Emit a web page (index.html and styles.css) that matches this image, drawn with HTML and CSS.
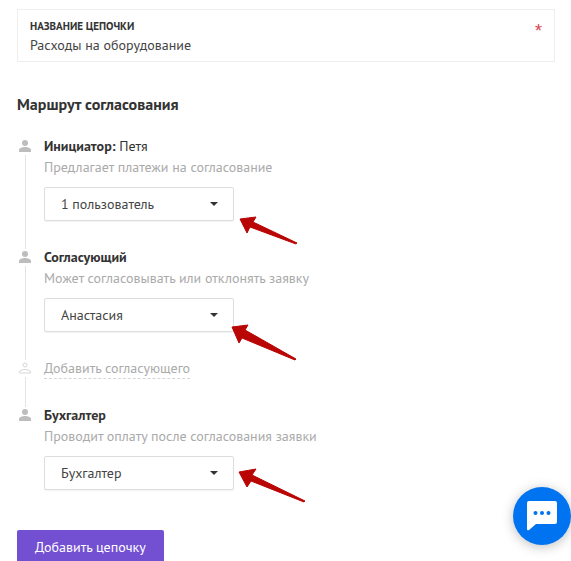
FILE: index.html
```
<!DOCTYPE html>
<html lang="ru">
<head>
    <meta charset="UTF-8">
    <meta name="viewport" content="width=device-width, initial-scale=1.0">
    <title>Маршрут согласования</title>
    <link rel="stylesheet" href="styles.css">
</head>
<body>

    <form class="chain-form">
        <div class="name-field">
            <div class="name-main">
                <label for="chain-name">Название цепочки</label>
                <input type="text" id="chain-name" value="Расходы на оборудование" required>
            </div>
            <span class="required">*</span>
        </div>

        <h2>Маршрут согласования</h2>

        <div class="route">
            <!-- Initiator -->
            <div class="step">
                <div class="marker">
                    <svg class="user-icon" viewBox="0 0 14 12"><circle cx="7" cy="3" r="3"/><path d="M1 12V10C1 8 4.500 7 7 7s6 1 6 3v2z"/></svg>
                </div>
                <div class="step-body">
                    <label for="initiator"><b>Инициатор:</b> Петя</label>
                    <p>Предлагает платежи на согласование</p>
                    <div class="select-box">
                        <select id="initiator">
                            <option>1 пользователь</option>
                        </select>
                        <svg class="arrow arrow-initiator" viewBox="0 0 66 34"><path d="M1 3L17 1l-3 5 44 21-1 1-46-17-3 6z"/></svg>
                    </div>
                </div>
            </div>

            <!-- Approver -->
            <div class="step">
                <div class="marker">
                    <svg class="user-icon" viewBox="0 0 14 12"><circle cx="7" cy="3" r="3"/><path d="M1 12V10C1 8 4.500 7 7 7s6 1 6 3v2z"/></svg>
                </div>
                <div class="step-body">
                    <label for="approver"><b>Согласующий</b></label>
                    <p>Может согласовывать или отклонять заявку</p>
                    <div class="select-box">
                        <select id="approver">
                            <option>Анастасия</option>
                        </select>
                        <svg class="arrow arrow-approver" viewBox="0 0 66 38"><path d="M1 3L17 1l-3 5 51 29-1 1-53-22-3 5z"/></svg>
                    </div>
                </div>
            </div>

            <!-- Add one more approver -->
            <div class="step">
                <div class="marker">
                    <svg class="user-icon outline" viewBox="0 0 14 12"><circle cx="7" cy="3" r="2"/><path d="M1.500 11v-1c0-1.500 3-2.500 5.500-2.500s5.500 1 5.500 2.500v1z"/></svg>
                </div>
                <div class="step-body">
                    <a href="#" class="add-link">Добавить согласующего</a>
                </div>
            </div>

            <!-- Accountant -->
            <div class="step">
                <div class="marker">
                    <svg class="user-icon" viewBox="0 0 14 12"><circle cx="7" cy="3" r="3"/><path d="M1 12V10C1 8 4.500 7 7 7s6 1 6 3v2z"/></svg>
                </div>
                <div class="step-body">
                    <label for="accountant"><b>Бухгалтер</b></label>
                    <p>Проводит оплату после согласования заявки</p>
                    <div class="select-box">
                        <select id="accountant">
                            <option>Бухгалтер</option>
                        </select>
                        <svg class="arrow arrow-accountant" viewBox="0 0 68 36"><path d="M1 4L18 1l-4 6 53 26-1 1-53-21-4 6z"/></svg>
                    </div>
                </div>
            </div>
        </div>

        <button type="submit" class="submit-btn">Добавить цепочку</button>
    </form>

    <button type="button" class="chat-btn" aria-label="Чат">
        <svg viewBox="0 0 30 30"><path fill="#fff" d="M2 0h26q2 0 2 2v19q0 2-2 2H9l-7 6q-2 1-2-1V2q0-2 2-2z"/><g fill="#0073f0"><circle cx="8.500" cy="12" r="2"/><circle cx="15" cy="12" r="2"/><circle cx="21.500" cy="12" r="2"/></g></svg>
    </button>

</body>
</html>
```
FILE: styles.css
```
* {
    box-sizing: border-box;
}

body {
    font-family: "PT Sans", "Noto Sans", sans-serif;
    font-size: 14px;
    line-height: 20px;
    color: #333;
    background-color: #fff;
    margin: 0;
    height: 100vh;
    overflow: hidden;
}

.chain-form {
    padding: 9px 16px 0 17px;
}

.name-field {
    display: flex;
    justify-content: space-between;
    border: 1px solid #eee;
    padding: 7px 12px 6px;
}

.name-main {
    flex: 1;
}

.name-field label {
    display: block;
    font-size: 11px;
    line-height: 18px;
    font-weight: bold;
    text-transform: uppercase;
}

.name-field input {
    display: block;
    width: 100%;
    height: 20px;
    padding: 0;
    border: none;
    outline: none;
    font: inherit;
    color: #444;
}

.required {
    height: 20px;
    color: #d9434e;
    font-family: "Liberation Sans", Arial, sans-serif;
    font-size: 18px;
    line-height: 28px;
}

h2 {
    font-size: 16px;
    line-height: 20px;
    margin: 32px 0 22px;
}

.step {
    display: flex;
    gap: 11px;
}

/* Icon with the line running down to the next step */
.marker {
    width: 16px;
    display: flex;
    flex-direction: column;
    align-items: center;
}

.marker::after {
    content: "";
    flex: 1;
    width: 1px;
    margin: 3px 0 -2px;
    background-color: #e4e4e4;
}

.step:last-child .marker::after {
    display: none;
}

.user-icon {
    width: 14px;
    height: 12px;
    margin-top: 4px;
    fill: #bdbdbd;
}

.user-icon.outline {
    fill: none;
    stroke: #d6d6d6;
}

.step-body {
    flex: 1;
    padding-bottom: 26px;
}

.step-body label {
    display: block;
}

.step-body p {
    margin: 1px 0 10px;
    color: #aaa;
}

.add-link {
    display: inline-block;
    color: #aaa;
    text-decoration: none;
    line-height: 19px;
    border-bottom: 1px dashed #d6d6d6;
}

.select-box {
    position: relative;
    width: 190px;
}

.select-box select {
    display: block;
    appearance: none;
    width: 100%;
    height: 34px;
    padding: 0 32px 0 16px;
    border: 1px solid #ddd;
    border-radius: 2px;
    background-color: #fff;
    box-shadow: 0 1px 1px rgba(0, 0, 0, 0.05);
    font: inherit;
    color: #444;
}

.select-box::after {
    content: "";
    position: absolute;
    top: 15px;
    right: 16px;
    border: 4px solid transparent;
    border-top-color: #333;
    border-bottom: none;
    pointer-events: none;
}

/* Pointers drawn over the page */
.arrow {
    position: absolute;
    fill: #b90504;
    stroke: #b90504;
    stroke-linejoin: round;
    pointer-events: none;
}

.arrow-initiator {
    left: 195px;
    top: 29px;
    width: 66px;
}

.arrow-approver {
    left: 187px;
    top: 26px;
    width: 66px;
}

.arrow-accountant {
    left: 194px;
    top: 12px;
    width: 68px;
}

.submit-btn {
    display: block;
    height: 34px;
    margin-top: 14px;
    padding: 0 18px;
    border: none;
    border-radius: 2px;
    background-color: #7350d2;
    font: inherit;
    color: #fff;
    cursor: pointer;
}

.chat-btn {
    position: fixed;
    right: 0;
    bottom: 16px;
    width: 58px;
    height: 58px;
    padding: 0;
    border: none;
    border-radius: 50%;
    background-color: #0073f0;
    box-shadow: 0 2px 12px rgba(0, 0, 0, 0.25);
    display: flex;
    justify-content: center;
    align-items: center;
    cursor: pointer;
}

.chat-btn svg {
    width: 30px;
    height: 30px;
}
```
